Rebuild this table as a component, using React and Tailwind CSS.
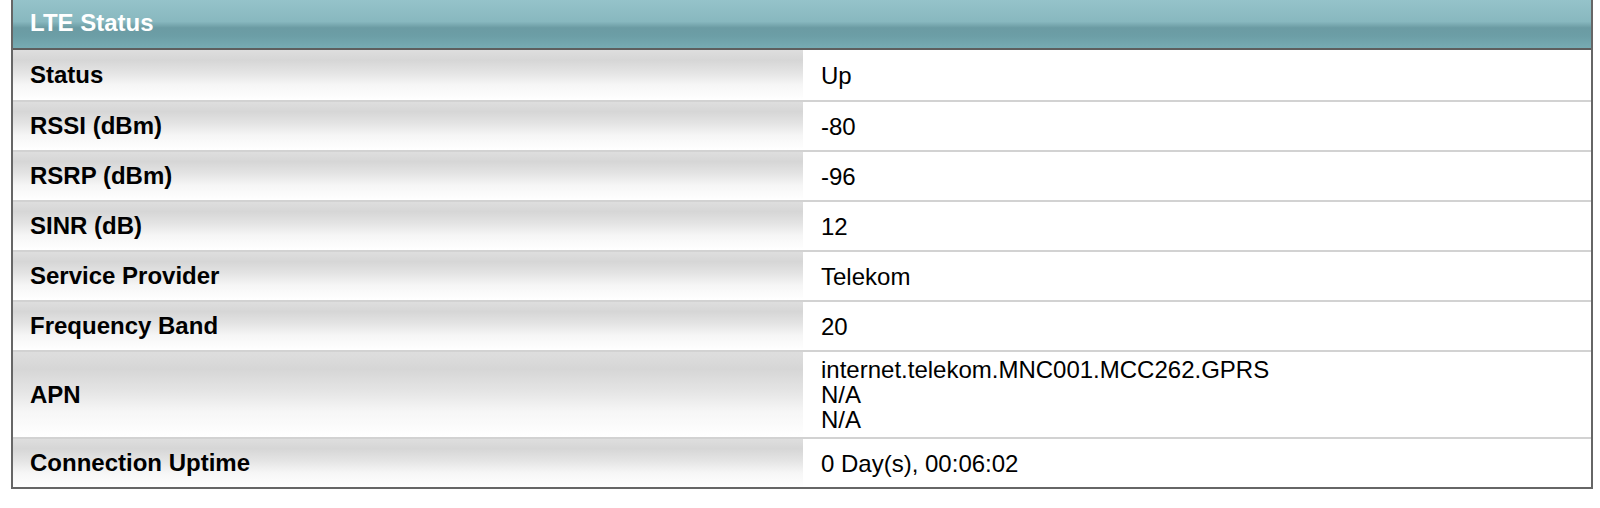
import React from "react";

const rows = [
  { label: "Status", value: ["Up"] },
  { label: "RSSI (dBm)", value: ["-80"] },
  { label: "RSRP (dBm)", value: ["-96"] },
  { label: "SINR (dB)", value: ["12"] },
  { label: "Service Provider", value: ["Telekom"] },
  { label: "Frequency Band", value: ["20"] },
  { label: "APN", value: ["internet.telekom.MNC001.MCC262.GPRS", "N/A", "N/A"] },
  { label: "Connection Uptime", value: ["0 Day(s), 00:06:02"] },
];

const App = () => {
  return (
    <div className="w-[1600px] h-[508px] bg-white pl-[11px] pr-[7px] font-['Liberation_Sans',Arial,sans-serif] text-[24px] text-black">
      <div className="border-x-2 border-b-2 border-[#666]">
        {/* header bar */}
        <div className="h-[50px] flex items-center pl-[17px] border-b-2 border-[#5e5e5e] bg-[linear-gradient(to_bottom,#95c3ca_0%,#88b8bf_45%,#6b9ba3_58%,#6c9ea6_75%,#77abb3_100%)]">
          <span className="text-white font-bold text-[24px] -mt-[2px]">LTE Status</span>
        </div>

        {rows.map((row, i) => (
          <div
            key={row.label}
            className={
              "grid grid-cols-[790px_1fr] " +
              (i < rows.length - 1 ? "border-b-2 border-[#d2d2d2]" : "")
            }
          >
            <div
              className={
                "flex items-center pl-[17px] font-bold bg-[linear-gradient(to_bottom,#dedede_0%,#d6d6d6_20%,#e4e4e4_45%,#f6f6f6_70%,#ffffff_100%)] " +
                (i === 0 ? "h-[50px]" : row.value.length > 1 ? "h-[85px]" : "h-[48px]")
              }
            >
              {row.label}
            </div>
            <div className="flex flex-col justify-center pl-[18px] leading-[25px]">
              {row.value.map((v, j) => (
                <div key={j}>{v}</div>
              ))}
            </div>
          </div>
        ))}
      </div>
    </div>
  );
};

export default App;
